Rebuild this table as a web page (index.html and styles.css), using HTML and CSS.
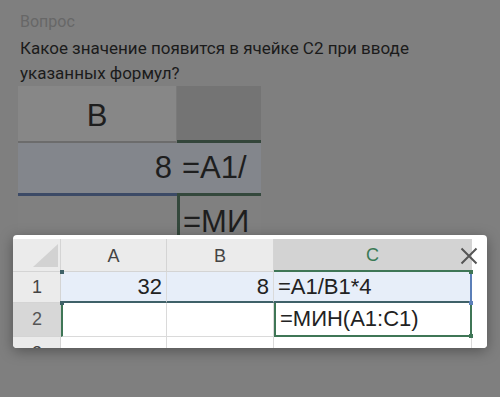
FILE: index.html
```html
<!DOCTYPE html>
<html lang="ru">
<head>
<meta charset="utf-8">
<link rel="stylesheet" href="styles.css">
</head>
<body>
<div class="page">
  <div class="label">Вопрос</div>
  <div class="question">Какое значение появится в ячейке C2 при вводе указанных формул?</div>
  <div class="figure">
    <div class="f-hb">B</div>
    <div class="f-hc"></div>
    <div class="f-b1">8</div>
    <div class="f-c1">=A1/</div>
    <div class="f-b2"></div>
    <div class="f-c2">=МИ</div>
  </div>
</div>
<div class="popup">
  <div class="sheet">
    <div class="corner"><svg width="26" height="23" viewBox="0 0 26 23"><path d="M25 0 L25 23 L0 23 Z" fill="#d2d2d2"/></svg></div>
    <div class="ch">A</div>
    <div class="ch">B</div>
    <div class="ch ch-sel">C</div>
    <div class="ch-end"></div>

    <div class="rh">1</div>
    <div class="cell r1 a1">32</div>
    <div class="cell r1 b1">8</div>
    <div class="cell r1 c1 txt">=A1/B1*4</div>
    <div class="end"></div>

    <div class="rh rh-sel">2</div>
    <div class="cell a2"></div>
    <div class="cell b2"></div>
    <div class="cell c2 txt">=МИН(A1:C1)</div>
    <div class="end"></div>

    <div class="rh rh-last">3</div>
    <div class="cell"></div>
    <div class="cell"></div>
    <div class="cell"></div>
    <div class="end"></div>
  </div>
  <svg class="close" width="18" height="18" viewBox="0 0 18 18"><path d="M1.5 1.5 L16.5 16.5 M16.5 1.5 L1.5 16.5" stroke="#555" stroke-width="2" fill="none"/></svg>
  <span class="handle h1"></span>
  <span class="handle h2"></span>
  <span class="handle h3"></span>
  <span class="handle h4"></span>
  <span class="handle h5"></span>
</div>
</body>
</html>
```

FILE: styles.css
```css
html, body {
  margin: 0;
  padding: 0;
}
body {
  width: 500px;
  height: 397px;
  overflow: hidden;
  background: #7f7f7f;
  font-family: Roboto, "Noto Sans", sans-serif;
  position: relative;
}
.page {
  padding: 11px 20px 0 20px;
}
.label {
  font-size: 16px;
  line-height: 21px;
  color: #676767;
}
.question {
  margin-top: 4px;
  font-size: 17px;
  line-height: 25px;
  color: #1b1b1b;
  width: 420px;
}
.figure {
  margin-left: -2px;
  width: 243px;
  height: 160px;
  display: grid;
  grid-template-columns: 159px 84px;
  grid-template-rows: 57px 53px 50px;
  font-family: "Liberation Sans", Arial, sans-serif;
  color: #1e1e1e;
  overflow: hidden;
}
.f-hb {
  background: #878787;
  border-bottom: 2px solid #6c6c6c;
  border-right: 1px solid #7a7a7a;
  font-size: 31px;
  display: flex;
  align-items: center;
  justify-content: center;
  padding-top: 4px;
}
.f-hc {
  background: #747474;
  border-bottom: 3px solid #34463b;
}
.f-b1 {
  background: #83868c;
  border-bottom: 3px solid #3c4a66;
  font-size: 31px;
  display: flex;
  align-items: center;
  justify-content: flex-end;
  padding-right: 5px;
}
.f-c1 {
  background: #83868c;
  border-bottom: 3px solid #34483c;
  font-size: 31px;
  display: flex;
  align-items: center;
  padding-left: 5px;
  white-space: nowrap;
}
.f-b2 {
  background: #808080;
}
.f-c2 {
  background: #808080;
  border-left: 3px solid #34483c;
  font-size: 31px;
  padding-left: 3px;
  padding-top: 8px;
  white-space: nowrap;
}
.popup {
  position: absolute;
  left: 13px;
  top: 235px;
  width: 474px;
  height: 113px;
  background: #ffffff;
  border-radius: 4px;
  box-shadow: 0 3px 14px rgba(0, 0, 0, 0.35);
  overflow: hidden;
}
.sheet {
  margin-top: 4px;
  display: grid;
  grid-template-columns: 48px 106px 107px 198px 15px;
  grid-template-rows: 33px 31px 34px 20px;
  font-family: "Liberation Sans", Arial, sans-serif;
  color: #222;
}
.corner {
  background: #ebebeb;
  border-right: 1px solid #d4d4d4;
  border-bottom: 1px solid #d4d4d4;
  display: flex;
  align-items: flex-end;
  justify-content: flex-end;
  padding: 0 1px 4px 0;
}
.ch {
  background: #ebebeb;
  border-right: 1px solid #d4d4d4;
  border-bottom: 1px solid #d4d4d4;
  display: flex;
  align-items: center;
  justify-content: center;
  font-size: 18px;
  color: #444;
  padding-top: 2px;
}
.ch-sel {
  background: #d3d3d3;
  color: #3a7a55;
  border-bottom: 2px solid #3f7656;
}
.ch-end {
  background: #ffffff;
}
.rh {
  background: #ebebeb;
  border-right: 1px solid #d4d4d4;
  border-bottom: 1px solid #d4d4d4;
  display: flex;
  align-items: center;
  padding-left: 19px;
  font-size: 18px;
  color: #444;
}
.rh-sel {
  background: #d7d7d7;
  color: #555;
}
.rh-last {
  align-items: flex-start;
  padding-top: 6px;
  box-sizing: border-box;
}
.cell {
  border-right: 1px solid #dadada;
  border-bottom: 1px solid #dadada;
  display: flex;
  align-items: center;
  justify-content: flex-end;
  padding-right: 4px;
  font-size: 22px;
  box-sizing: border-box;
}
.cell.txt {
  justify-content: flex-start;
  padding-left: 4px;
  padding-right: 0;
}
.r1 {
  background: #e7eef9;
}
.a1, .b1 {
  border-bottom: 2px solid #3f6168;
}
.c1 {
  border-right: 2px solid #5b7fb8;
  border-bottom: 2px solid #3f6168;
}
.a2 {
  border-left: 2px solid #3f7656;
}
.c2 {
  border: 2px solid #3f7656;
  border-top: none;
}
.end {
  background: #ffffff;
}
.close {
  position: absolute;
  left: 447px;
  top: 12px;
}
.handle {
  position: absolute;
  width: 4px;
  height: 4px;
  background: #3f6168;
}
.h1 { left: 47px; top: 35px; }
.h2 { left: 47px; top: 66px; }
.h3 { left: 456px; top: 35px; background: #3f7656; }
.h4 { left: 456px; top: 66px; background: #5b7fb8; }
.h5 { left: 456px; top: 99px; background: #3f7656; }
```
